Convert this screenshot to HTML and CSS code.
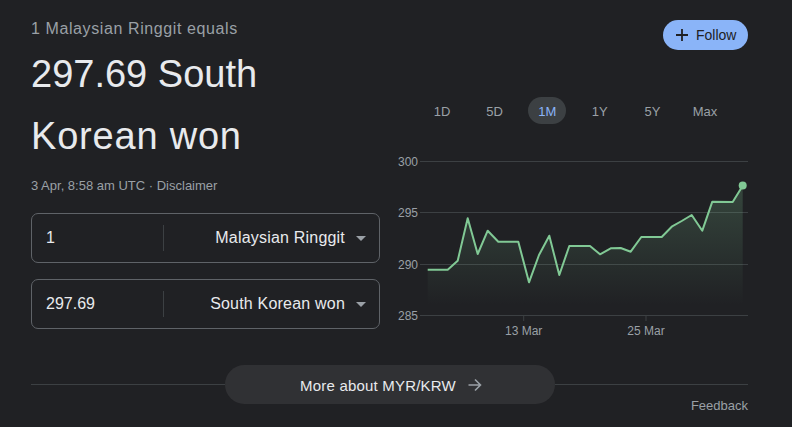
FILE: index.html
```html
<!DOCTYPE html>
<html>
<head>
<meta charset="utf-8">
<link rel="stylesheet" href="styles.css">
</head>
<body>
<div class="card">
  <div class="top">
    <div class="left">
      <div class="equals">1 Malaysian Ringgit equals</div>
      <div class="result">297.69 South<br><span class="kw">Korean won</span></div>
      <div class="meta">3 Apr, 8:58 am UTC · <span class="disc">Disclaimer</span></div>
      <div class="box">
        <div class="val">1</div>
        <div class="sep"></div>
        <div class="cur">Malaysian Ringgit <span class="caret"></span></div>
      </div>
      <div class="box">
        <div class="val">297.69</div>
        <div class="sep"></div>
        <div class="cur">South Korean won <span class="caret"></span></div>
      </div>
    </div>
    <div class="right">
      <div class="follow-row">
        <div class="follow">
          <svg width="14" height="14" viewBox="0 0 14 14"><path d="M7 1v12M1 7h12" stroke="#202124" stroke-width="1.8"/></svg>
          <span>Follow</span>
        </div>
      </div>
      <div class="chips">
        <div class="chip">1D</div>
        <div class="chip">5D</div>
        <div class="chip on">1M</div>
        <div class="chip">1Y</div>
        <div class="chip">5Y</div>
        <div class="chip">Max</div>
      </div>
      <svg class="chart" width="368" height="190" viewBox="0 0 368 190">
        <defs>
          <linearGradient id="g" x1="0" y1="0" x2="0" y2="1">
            <stop offset="0" stop-color="#81c995" stop-opacity="0.22"/>
            <stop offset="1" stop-color="#81c995" stop-opacity="0"/>
          </linearGradient>
        </defs>
        <g stroke="#3c4043" stroke-width="1">
          <line x1="40" y1="11.5" x2="368" y2="11.5"/>
          <line x1="40" y1="62.5" x2="368" y2="62.5"/>
          <line x1="40" y1="114.5" x2="368" y2="114.5"/>
          <line x1="40" y1="165.5" x2="368" y2="165.5"/>
          <line x1="143.7" y1="165" x2="143.7" y2="171"/>
          <line x1="266" y1="165" x2="266" y2="171"/>
        </g>
        <g class="axis" fill="#9aa0a6" font-size="12">
          <text x="38" y="15.5" text-anchor="end">300</text>
          <text x="38" y="66.5" text-anchor="end">295</text>
          <text x="38" y="118.5" text-anchor="end">290</text>
          <text x="38" y="169.5" text-anchor="end">285</text>
          <text x="143.7" y="184.5" text-anchor="middle">13 Mar</text>
          <text x="266" y="184.5" text-anchor="middle">25 Mar</text>
        </g>
        <path fill="url(#g)" d="M47.7 119.7 L67.7 119.7 L77.7 110.7 L87.7 68.3 L97.7 104 L107.7 80.7 L118.3 91.7 L138.3 91.7 L149 132.3 L159 105 L169.3 85.7 L179.3 125 L189.3 96 L210 96 L220 104.3 L230.7 98.3 L240.7 98 L250.7 101.7 L261.3 87 L281.7 87 L291.7 76.7 L301.7 71 L311.7 65 L322.3 80.7 L332.3 51.7 L352.7 52 L362.7 35.7 L362.7 155 L47.7 155 Z"/>
        <polyline fill="none" stroke="#81c995" stroke-width="2" stroke-linejoin="round" points="47.7,119.7 67.7,119.7 77.7,110.7 87.7,68.3 97.7,104 107.7,80.7 118.3,91.7 138.3,91.7 149,132.3 159,105 169.3,85.7 179.3,125 189.3,96 210,96 220,104.3 230.7,98.3 240.7,98 250.7,101.7 261.3,87 281.7,87 291.7,76.7 301.7,71 311.7,65 322.3,80.7 332.3,51.7 352.7,52 362.7,35.7"/>
        <circle cx="362.7" cy="35.5" r="4" fill="#81c995"/>
      </svg>
    </div>
  </div>
  <div class="more-row">
    <div class="rule"></div>
    <div class="more">
      <span>More about MYR/KRW</span>
      <svg width="16" height="16" viewBox="0 0 16 16"><path d="M1.5 8h12M8 2.5 13.5 8 8 13.5" fill="none" stroke="#9aa0a6" stroke-width="1.6"/></svg>
    </div>
    <div class="rule"></div>
  </div>
  <div class="feedback">Feedback</div>
</div>
</body>
</html>
```

FILE: styles.css
```css
* { box-sizing: border-box; }
html, body { margin: 0; padding: 0; }
body {
  background: #202124;
  font-family: "Liberation Sans", Arial, sans-serif;
  color: #e8eaed;
  width: 792px;
  height: 427px;
  overflow: hidden;
}
.card {
  padding: 0 44px 0 31px;
}
.top {
  display: flex;
}
.left {
  width: 349px;
  display: flex;
  flex-direction: column;
}
.equals {
  margin-top: 18px;
  font-size: 16px;
  line-height: 22px;
  letter-spacing: 0.6px;
  color: #9aa0a6;
}
.result {
  font-size: 38px;
  line-height: 62px;
  color: #e8eaed;
  margin-top: 3px;
}
.kw {
  letter-spacing: 0.8px;
}
.meta {
  font-size: 13px;
  line-height: 16px;
  margin-top: 11px;
  color: #9aa0a6;
}
.box {
  height: 50px;
  border: 1px solid #5f6368;
  border-radius: 7px;
  display: flex;
  align-items: center;
  margin-top: 19px;
}
.box + .box { margin-top: 16px; }
.val {
  width: 131px;
  padding-left: 14px;
  font-size: 16px;
  color: #e8eaed;
}
.sep {
  width: 1px;
  height: 26px;
  background: #3c4043;
}
.cur {
  flex: 1;
  display: flex;
  align-items: center;
  justify-content: flex-end;
  padding-right: 13px;
  font-size: 16px;
  letter-spacing: 0.2px;
  color: #e8eaed;
}
.caret {
  width: 0;
  height: 0;
  border-left: 5px solid transparent;
  border-right: 5px solid transparent;
  border-top: 5px solid #9aa0a6;
  margin-left: 11px;
}
.right {
  width: 368px;
  display: flex;
  flex-direction: column;
}
.follow-row {
  display: flex;
  justify-content: flex-end;
  margin-top: 20px;
}
.follow {
  width: 85px;
  height: 30px;
  border-radius: 15px;
  background: #8ab4f8;
  color: #202124;
  display: flex;
  align-items: center;
  padding-left: 12px;
  gap: 7px;
  font-size: 14px;
}
.follow svg { display: block; }
.chips {
  display: flex;
  gap: 14.6px;
  padding-left: 43px;
  margin-top: 47px;
}
.chip {
  width: 38px;
  height: 27px;
  border-radius: 14px;
  display: flex;
  align-items: center;
  justify-content: center;
  padding-top: 1px;
  font-size: 13px;
  color: #9aa0a6;
}
.chip.on {
  background: #3c4043;
  color: #8ab4f8;
}
.chart {
  display: block;
  margin-top: 26px;
  font-family: "Liberation Sans", Arial, sans-serif;
}
.more-row {
  display: flex;
  align-items: center;
  margin-top: 25px;
}
.rule {
  flex: 1;
  height: 1px;
  background: #3c4043;
}
.more {
  width: 330px;
  height: 39px;
  border-radius: 20px;
  background: #303134;
  display: flex;
  align-items: center;
  justify-content: center;
  gap: 11px;
  font-size: 15px;
  letter-spacing: 0.2px;
  color: #e8eaed;
  padding-left: 4px;
  padding-top: 1px;
}
.more svg { display: block; }
.feedback {
  text-align: right;
  font-size: 13px;
  line-height: 16px;
  color: #9aa0a6;
  margin-top: -6px;
}
```
